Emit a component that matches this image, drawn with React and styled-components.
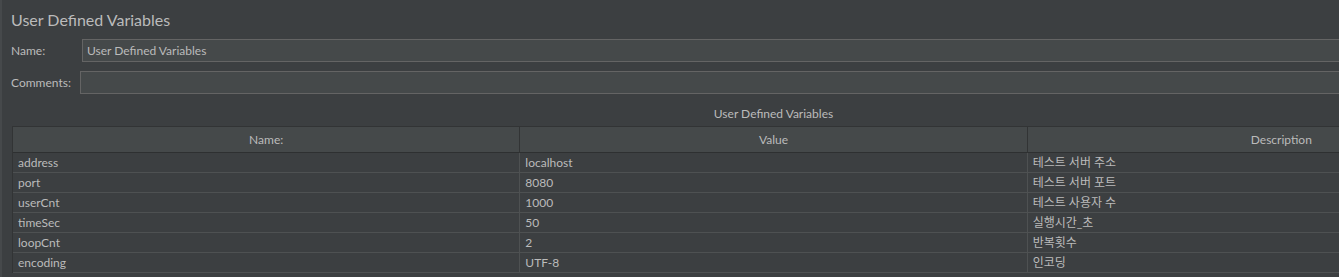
import styled, { createGlobalStyle } from "styled-components";

const GlobalStyle = createGlobalStyle`
  html, body { margin: 0; padding: 0; background: #3c3f41; }
  body { font-family: Lato, "Noto Sans CJK KR", sans-serif; color: #bbbbbb; }
`;

const variables = [
  { name: "address", value: "localhost", desc: "테스트 서버 주소" },
  { name: "port", value: "8080", desc: "테스트 서버 포트" },
  { name: "userCnt", value: "1000", desc: "테스트 사용자 수" },
  { name: "timeSec", value: "50", desc: "실행시간_초" },
  { name: "loopCnt", value: "2", desc: "반복횟수" },
  { name: "encoding", value: "UTF-8", desc: "인코딩" },
];

export default function App() {
  return (
    <>
      <GlobalStyle />
      <Page>
        <Title>User Defined Variables</Title>
        <FieldRow $top={6}>
          <Label $width={71}>Name:</Label>
          <Field>User Defined Variables</Field>
        </FieldRow>
        <FieldRow $top={9}>
          <Label $width={69}>Comments:</Label>
          <Field />
        </FieldRow>
        <TableBlock>
          <Caption>User Defined Variables</Caption>
          <Grid>
            <HeadCell>Name:</HeadCell>
            <HeadCell>Value</HeadCell>
            <HeadCell $last>Description</HeadCell>
            {variables.map(v => (
              <Row key={v.name}>
                <Cell>{v.name}</Cell>
                <Cell>{v.value}</Cell>
                <Cell $last>{v.desc}</Cell>
              </Row>
            ))}
          </Grid>
        </TableBlock>
      </Page>
    </>
  );
}

const Page = styled.div`
  width: 1339px;
  height: 277px;
  box-sizing: border-box;
  border-left: 2px solid #46494b;
  padding-left: 9px;
  overflow: hidden;
`;
const Title = styled.div`
  height: 33px;
  line-height: 40px;
  font-size: 16px;
  color: #bbbbbb;
`;
const FieldRow = styled.div`
  display: flex;
  align-items: center;
  margin-top: ${({ $top }) => $top}px;
  height: 23px;
  font-size: 12px;
`;
const Label = styled.div`
  width: ${({ $width }) => $width}px;
  flex: none;
`;
const Field = styled.div`
  flex: none;
  width: 1400px;
  height: 23px;
  box-sizing: border-box;
  border: 1px solid #646464;
  background: #45494a;
  padding-left: 4px;
  line-height: 21px;
  color: #bbbbbb;
`;
const TableBlock = styled.div`
  margin-top: 10px;
  margin-left: 1px;
  width: 1523px;
  font-size: 12px;
`;
const Caption = styled.div`
  height: 22px;
  line-height: 20px;
  text-align: center;
`;
const Grid = styled.div`
  display: grid;
  grid-template-columns: repeat(3, 1fr);
  border-top: 1px solid #323435;
  border-left: 1px solid #323435;
`;
const HeadCell = styled.div`
  height: 25px;
  line-height: 26px;
  text-align: center;
  background: #45494a;
  border-bottom: 1px solid #2e3031;
  border-right: ${({ $last }) => ($last ? "none" : "1px solid #323435")};
`;
const Row = styled.div`
  display: contents;
`;
const Cell = styled.div`
  height: 19px;
  line-height: 19px;
  padding-left: 5px;
  border-bottom: 1px solid #4e5152;
  border-right: ${({ $last }) => ($last ? "none" : "1px solid #4e5152")};
  white-space: nowrap;
`;
